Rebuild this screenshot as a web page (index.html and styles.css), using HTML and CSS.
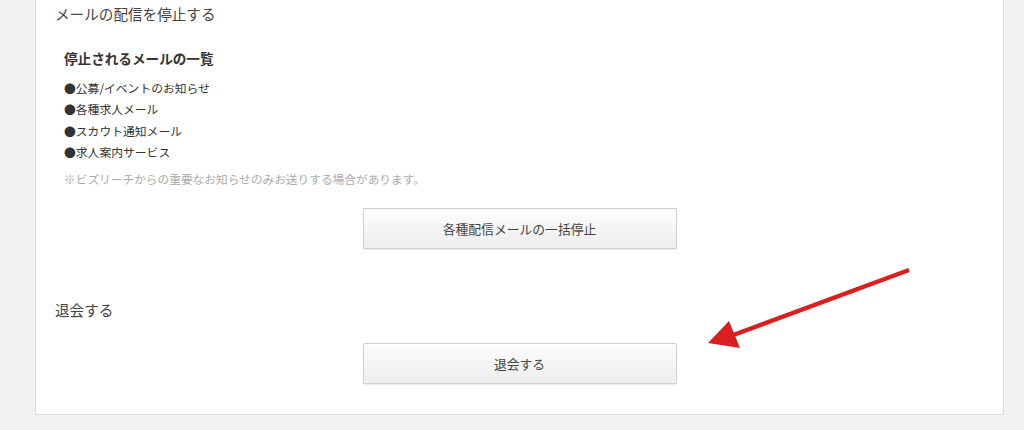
FILE: index.html
```html
<!DOCTYPE html>
<html lang="ja">
<head>
<meta charset="utf-8">
<link rel="stylesheet" href="styles.css">
</head>
<body>
<div class="page">
  <section class="card">
    <h2 class="section-title">メールの配信を停止する</h2>
    <div class="stop-list">
      <h3 class="list-title">停止されるメールの一覧</h3>
      <ul class="mail-list">
        <li>●公募/イベントのお知らせ</li>
        <li>●各種求人メール</li>
        <li>●スカウト通知メール</li>
        <li>●求人案内サービス</li>
      </ul>
      <p class="note">※ビズリーチからの重要なお知らせのみお送りする場合があります。</p>
    </div>
    <div class="btn-row first">
      <button class="btn">各種配信メールの一括停止</button>
    </div>
    <h2 class="section-title withdraw">退会する</h2>
    <div class="btn-row second">
      <button class="btn">退会する</button>
    </div>
  </section>
  <svg class="arrow" width="1024" height="430" viewBox="0 0 1024 430">
    <line x1="909" y1="270" x2="728" y2="337" stroke="#d9201f" stroke-width="4.5" stroke-linecap="butt"/>
    <polygon points="708,343 729,321 740,348" fill="#d9201f"/>
  </svg>
</div>
</body>
</html>
```
FILE: styles.css
```css
html, body {
  margin: 0;
  padding: 0;
}
body {
  background: #f2f2f2;
  font-family: "Noto Sans CJK JP", "Noto Sans", sans-serif;
  color: #333;
  width: 1024px;
  height: 430px;
  overflow: hidden;
}
.page {
  position: relative;
  width: 1024px;
  height: 430px;
}
.card {
  margin-left: 35px;
  width: 967px;
  background: #fff;
  border: 1px solid #dcdcdc;
  border-top: none;
  padding: 4px 0 30px 0;
  box-sizing: content-box;
}
.section-title {
  margin: 0 0 0 19px;
  font-size: 14.6px;
  font-weight: normal;
  line-height: 20px;
  color: #444;
}
.stop-list {
  padding-left: 28px;
}
.list-title {
  margin: 24px 0 0 0;
  font-size: 13.6px;
  font-weight: bold;
  line-height: 20px;
  color: #333;
}
.mail-list {
  list-style: none;
  margin: 9px 0 0 0;
  padding: 0;
}
.mail-list li {
  font-size: 11.8px;
  line-height: 21.4px;
  color: #333;
}
.note {
  margin: 6px 0 0 0;
  font-size: 11.7px;
  line-height: 20px;
  color: #aaa;
}
.btn-row {
  display: flex;
  justify-content: center;
}
.btn-row.first {
  margin-top: 19px;
}
.btn-row.second {
  margin-top: 23px;
}
.withdraw {
  margin-top: 51px;
}
.btn {
  width: 314px;
  height: 41px;
  border: 1px solid #cfcfcf;
  border-radius: 1px;
  background: linear-gradient(#fdfdfd, #ededed);
  box-shadow: 0 1px 1px rgba(0,0,0,0.08);
  font-family: "Noto Sans CJK JP", "Noto Sans", sans-serif;
  font-size: 12.8px;
  color: #444;
  padding: 0;
  cursor: pointer;
}
.arrow {
  position: absolute;
  left: 0;
  top: 0;
  pointer-events: none;
}
```
